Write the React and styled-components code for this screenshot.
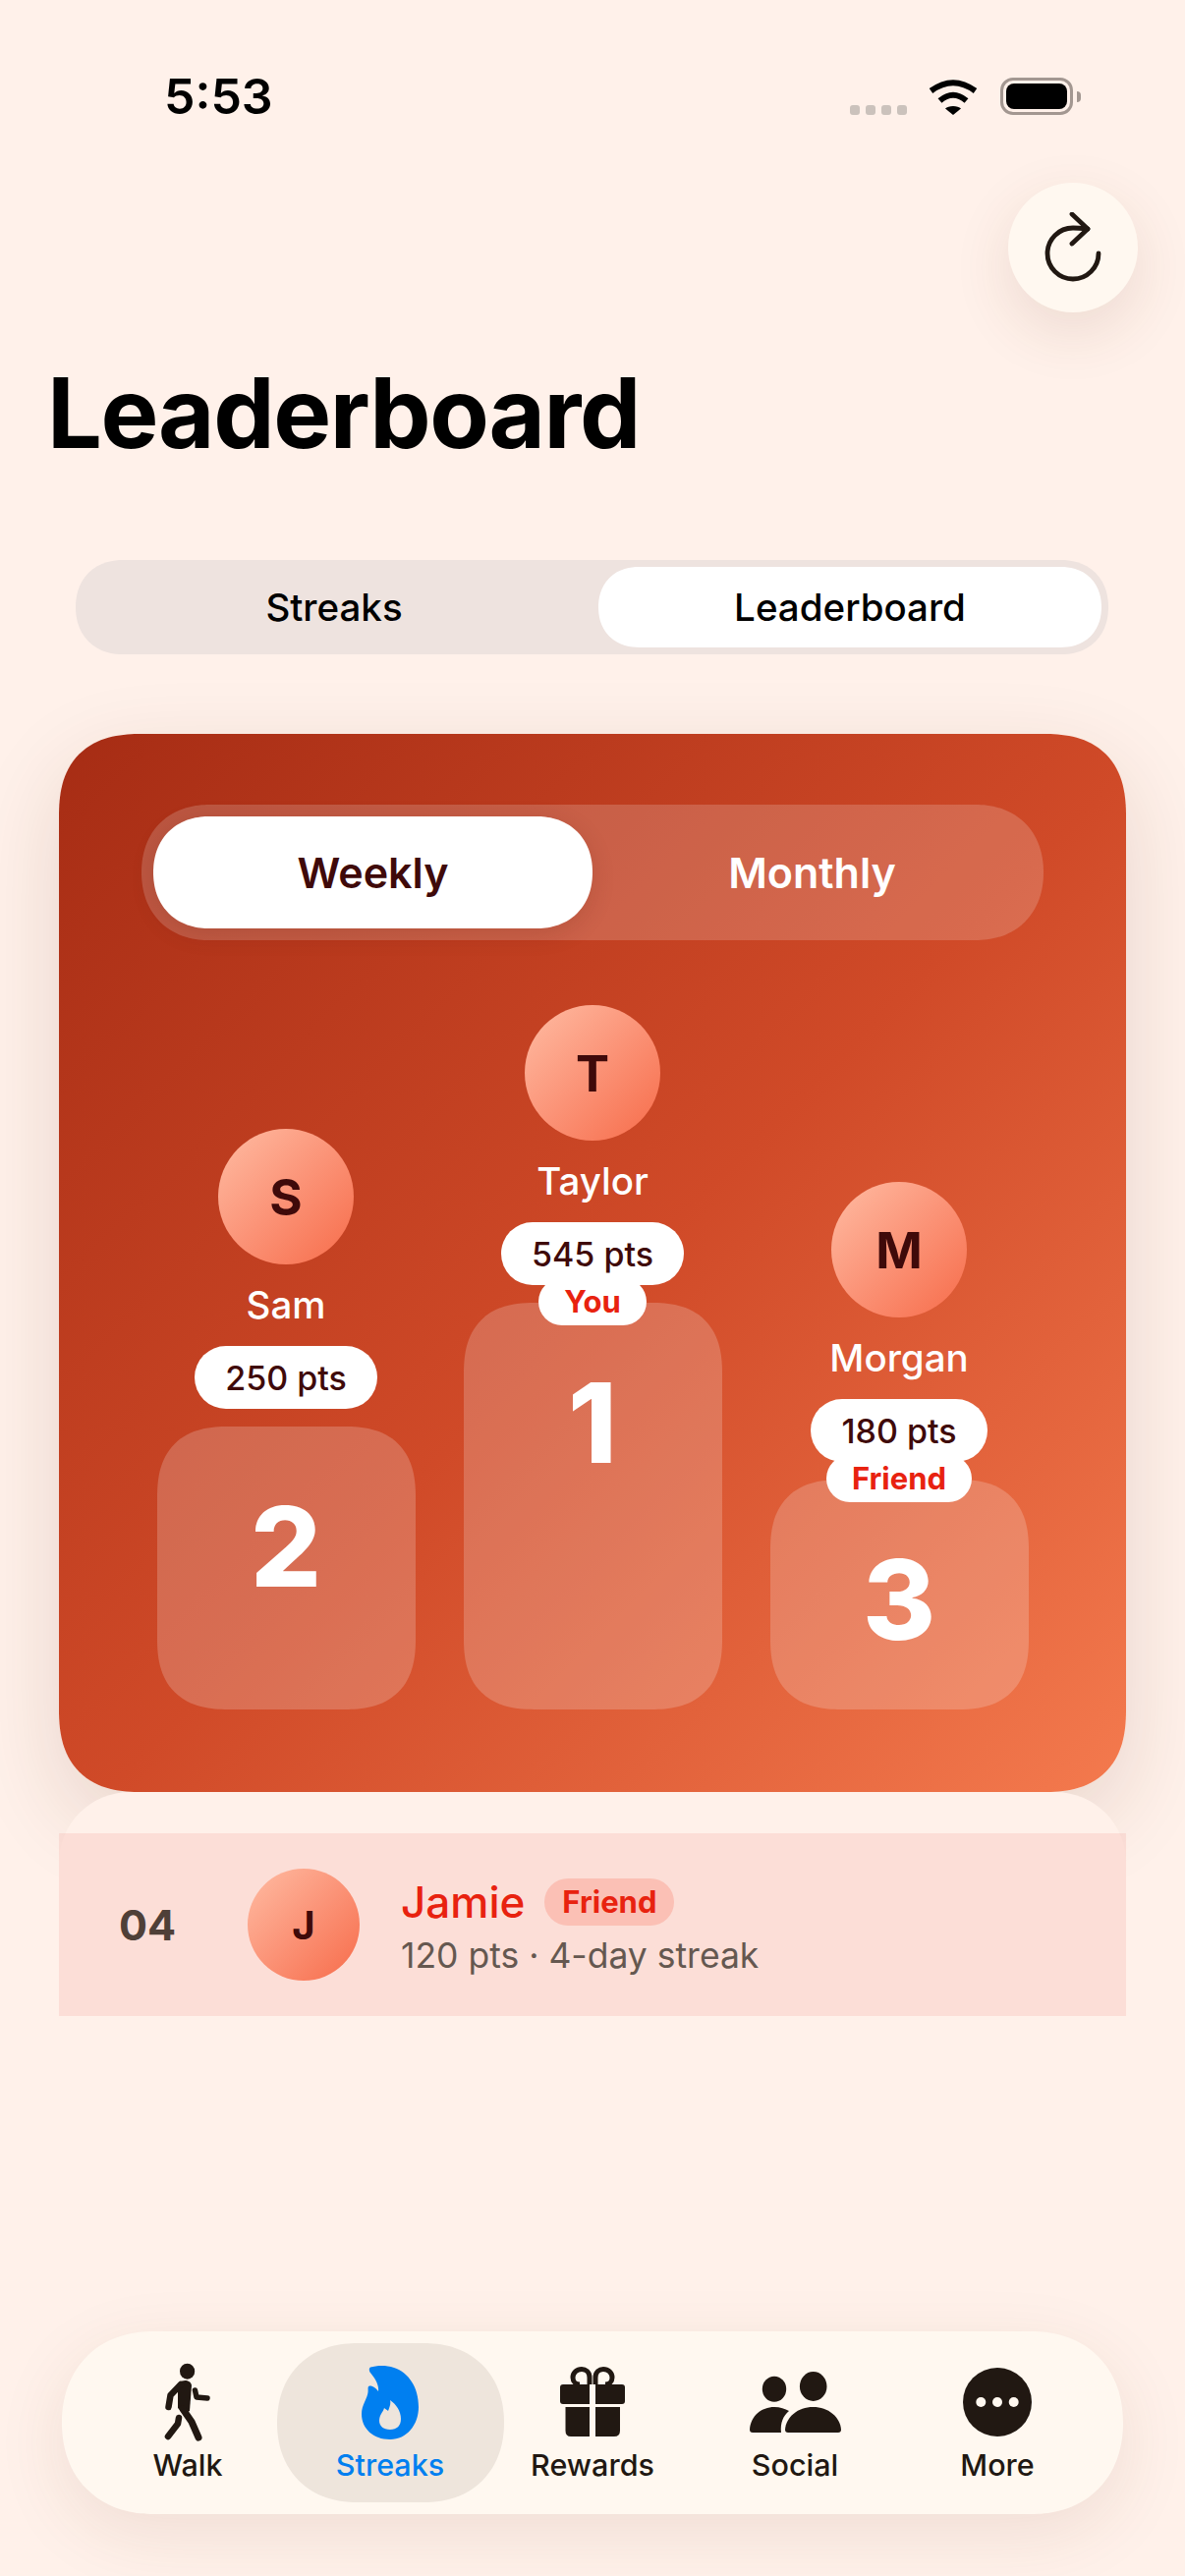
import React from 'react';
import styled, { createGlobalStyle, css } from 'styled-components';

const GlobalStyle = createGlobalStyle`
  html, body {
    margin: 0;
    padding: 0;
    background: #fff1ea;
  }
  * {
    box-sizing: border-box;
  }
`;

// continuous corners for the big panels, a softer one for the pills
const squircle = css`
  corner-shape: superellipse(1.3);
`;

const softPill = css`
  corner-shape: superellipse(1.12);
`;

const Page = styled.div`
  width: 1206px;
  height: 2622px;
  padding-top: 79px;
  display: flex;
  flex-direction: column;
  overflow: hidden;
  background: #fff1ea;
  color: #000;
  font-family: Inter, 'Liberation Sans', sans-serif;
`;

const StatusBar = styled.div`
  height: 38px;
  padding: 0 106px 0 167px;
  display: flex;
  align-items: center;
  justify-content: space-between;
`;

const Time = styled.div`
  font-size: 50px;
  font-weight: 600;
  line-height: 38px;
`;

const StatusIcons = styled.div`
  display: flex;
  align-items: flex-end;
`;

const SignalDots = styled.div`
  display: flex;
  gap: 6px;
  margin-right: 22px;
`;

const SignalDot = styled.span`
  width: 10px;
  height: 10px;
  border-radius: 3px;
  background: #cbc2bc;
`;

const Battery = styled.div`
  position: relative;
  width: 74px;
  height: 38px;
  margin: 0 8px 0 23px;
  padding: 3px;
  border: 3px solid #a39791;
  border-radius: 13px;

  &::after {
    content: '';
    position: absolute;
    right: -11px;
    top: 11px;
    width: 4px;
    height: 11px;
    border-radius: 0 4px 4px 0;
    background: #a39791;
  }
`;

const BatteryFill = styled.div`
  width: 100%;
  height: 100%;
  border-radius: 8px;
  background: #000;
`;

const RefreshButton = styled.button`
  align-self: flex-end;
  width: 132px;
  height: 132px;
  margin: 69px 48px 0 0;
  padding: 0;
  display: flex;
  align-items: center;
  justify-content: center;
  border: none;
  border-radius: 50%;
  background: #fff8f0;
  box-shadow: 0 20px 60px rgba(110, 60, 30, 0.12);
`;

const Title = styled.h1`
  margin: 42px 0 0 48px;
  font-size: 99px;
  font-weight: 700;
  line-height: 120px;
  letter-spacing: -1.4px;
`;

const Segmented = styled.div`
  ${softPill}
  width: 1051px;
  height: 96px;
  margin: 90px 0 0 77px;
  padding: 7px;
  display: flex;
  gap: 13px;
  border-radius: 48px;
  background: #eee3df;
`;

const Segment = styled.div`
  ${softPill}
  flex: 1;
  display: flex;
  align-items: center;
  justify-content: center;
  border-radius: 41px;
  font-size: 38.500px;
  font-weight: 500;
  background: ${(p) => (p.$active ? '#fff' : 'transparent')};
`;

const Card = styled.section`
  ${squircle}
  width: 1086px;
  height: 1077px;
  margin: 81px 0 0 60px;
  padding-top: 72px;
  border-radius: 84px;
  background: linear-gradient(135deg, #a62c14 0%, #d04a28 52%, #f47a4e 100%);
  box-shadow: 0 30px 90px rgba(90, 40, 20, 0.14);
`;

const PeriodToggle = styled.div`
  ${softPill}
  width: 918px;
  height: 138px;
  margin: 0 auto;
  padding: 12px;
  display: flex;
  border-radius: 69px;
  background: rgba(255, 255, 255, 0.18);
`;

const PeriodOption = styled.div`
  ${softPill}
  flex: 1;
  display: flex;
  align-items: center;
  justify-content: center;
  border-radius: 57px;
  font-size: 43px;
  font-weight: 600;
  color: ${(p) => (p.$active ? '#3f0a0a' : '#fff')};
  background: ${(p) => (p.$active ? '#fff' : 'transparent')};
  box-shadow: ${(p) => (p.$active ? '0 6px 24px rgba(80, 20, 0, 0.14)' : 'none')};
`;

const PodiumRow = styled.div`
  height: 717px;
  margin-top: 66px;
  display: flex;
  align-items: flex-end;
  justify-content: center;
  gap: 49px;
`;

const PodiumColumn = styled.div`
  width: 263px;
  display: flex;
  flex-direction: column;
  align-items: center;
`;

const Avatar = styled.div`
  width: ${(p) => p.$size}px;
  height: ${(p) => p.$size}px;
  flex-shrink: 0;
  display: flex;
  align-items: center;
  justify-content: center;
  border-radius: 50%;
  background: linear-gradient(135deg, #ffbca3 0%, #fb9377 50%, #f76c4a 100%);
  color: #3f0a0a;
  font-size: ${(p) => p.$font}px;
  font-weight: 700;
`;

const PodiumName = styled.div`
  margin: 18px 0;
  font-size: 38.500px;
  font-weight: 500;
  line-height: 47px;
  color: #fff;
`;

const Points = styled.div`
  position: relative;
  height: 64px;
  margin-bottom: 18px;
  padding: 0 31px;
  display: flex;
  align-items: center;
  border-radius: 32px;
  background: #fff;
  color: #3f0a0a;
  font-size: 34px;
  font-weight: 500;
  white-space: nowrap;
`;

const PodiumTag = styled.div`
  position: relative;
  z-index: 1;
  height: 48px;
  margin: -25px 0 -23px;
  padding: 0 26px 2px;
  display: flex;
  align-items: center;
  border-radius: 24px;
  background: #fff;
  color: #e8220f;
  font-size: 31px;
  font-weight: 700;
`;

const Podium = styled.div`
  ${squircle}
  width: 100%;
  height: ${(p) => p.$height}px;
  padding-top: 66px;
  border-radius: 72px;
  background: rgba(255, 255, 255, 0.2);
  color: #fff;
  font-size: 113px;
  font-weight: 800;
  line-height: 113px;
  text-align: center;
`;

const ListPanel = styled.div`
  flex: 1;
  width: 1086px;
  margin-left: 60px;
  padding-top: 42px;
  border-radius: 72px 72px 0 0;
  background: #fff1ea;
`;

const ListRow = styled.div`
  height: 186px;
  padding-left: 61px;
  display: flex;
  align-items: center;
  background: rgba(233, 92, 83, 0.12);
`;

const RowRank = styled.div`
  width: 131px;
  font-size: 43px;
  font-weight: 700;
  color: #4f4038;
`;

const RowBody = styled.div`
  margin-left: 42px;
  padding-top: 4px;
  display: flex;
  flex-direction: column;
`;

const RowTop = styled.div`
  height: 52px;
  display: flex;
  align-items: center;
  gap: 20px;
`;

const RowName = styled.div`
  font-size: 44px;
  font-weight: 500;
  color: #e8220f;
`;

const RowTag = styled.div`
  height: 48px;
  padding: 0 18px;
  display: flex;
  align-items: center;
  border-radius: 24px;
  background: #fbc0b5;
  color: #e8220f;
  font-size: 31px;
  font-weight: 700;
`;

const RowMeta = styled.div`
  margin-top: 7px;
  font-size: 35.500px;
  line-height: 44px;
  color: #655850;
`;

const TabBar = styled.nav`
  ${softPill}
  width: 1080px;
  height: 186px;
  margin: 0 0 63px 63px;
  padding: 0 25px;
  flex-shrink: 0;
  display: flex;
  align-items: center;
  border-radius: 93px;
  background: #fff8f0;
  box-shadow: 0 20px 70px rgba(110, 60, 30, 0.1);
`;

const TabItem = styled.div`
  ${softPill}
  flex: 0 0 ${(p) => (p.$active ? 231 : 206)}px;
  height: 162px;
  margin: 0 ${(p) => (p.$active ? -12.5 : 0)}px;
  padding-top: 20px;
  display: flex;
  flex-direction: column;
  align-items: center;
  border-radius: 81px;
  background: ${(p) => (p.$active ? '#eee5dc' : 'transparent')};
  color: ${(p) => (p.$active ? '#007ff0' : '#211812')};
`;

const TabIcon = styled.div`
  height: 80px;
  display: flex;
  align-items: center;
  justify-content: center;
`;

const TabLabel = styled.div`
  margin-top: 6px;
  font-size: 30.500px;
  font-weight: 500;
  line-height: 36px;
`;

function WifiIcon() {
  return (
    <svg width="50" height="37" viewBox="0 0 50 37" fill="none" stroke="#000" strokeWidth="6">
      <path d="M2.5 12.5Q25-4 47.5 12.5" />
      <path d="M11.5 22.5Q25 11 38.5 22.5" />
      <path d="M17 30.6C20 27 30 27 33 30.6L25 37Z" fill="#000" stroke="none" />
    </svg>
  );
}

function RefreshIcon() {
  return (
    <svg width="62" height="72" viewBox="0 0 62 72" fill="none" stroke="#211812" strokeWidth="4.8" strokeLinecap="round" strokeLinejoin="round">
      <path d="M57 42A26 26 0 1 1 31 16C36 16 41 16.5 46 17" />
      <path d="M30 2L46 17L30 32" />
    </svg>
  );
}

function WalkIcon() {
  return (
    <svg width="50" height="80" viewBox="0 0 50 80" fill="#211812" stroke="#211812" strokeLinecap="round" strokeLinejoin="round">
      <ellipse cx="24.6" cy="8.7" rx="7.6" ry="8" stroke="none" />
      <path d="M17 20C20 17 28 17 29 23L27 49L21 52L15 46L15 28Z" stroke="none" />
      <path d="M18 22L7.5 33L5.5 45" fill="none" strokeWidth="6.5" />
      <path d="M20 47L29 60L36 76" fill="none" strokeWidth="7" />
      <path d="M16 56L15 62L5 75" fill="none" strokeWidth="6.5" />
      <path d="M32.5 28L34 35L45 36" fill="none" strokeWidth="5.5" />
    </svg>
  );
}

function FlameIcon() {
  return (
    <svg width="58" height="75" viewBox="0 0 58 75" fill="#007ff0">
      <path
        fillRule="evenodd"
        d="M9 1.5C15 0 24-1 33 2C48 7 58 22 58 42C58 60 46 75 29 75C12 75 0 64 0 49C0 40 6 33 6.5 27C6.8 23 6 21 8 20.500C11 20 15 23 17 26C18 19 13 12 8.5 6.5C7.5 4.5 7.5 2.5 9 1.5ZM29 35C30 39 28.500 42 27 46C26 45 24 44 23 43C22 47 18 50 18 56C18 61 22 65 29 65C36 65 40 61 40 54C40 46 35 39 29 35Z"
      />
    </svg>
  );
}

function GiftIcon() {
  return (
    <svg width="66" height="72" viewBox="0 0 66 72" fill="#211812">
      <path d="M30 11C30 5 26 2.500 22 2.500C17 2.500 13 6 13 11C13 15 16 18 20 18M36 11C36 5 40 2.500 44 2.500C49 2.500 53 6 53 11C53 15 50 18 46 18M30 11V18M36 11V18" fill="none" stroke="#211812" strokeWidth="5" />
      <path d="M3 18H30V38H3Q0 38 0 35V21Q0 18 3 18Z" />
      <path d="M36 18H63Q66 18 66 21V35Q66 38 63 38H36Z" />
      <path d="M5.500 41H30V71H11Q5.500 71 5.500 65Z" />
      <path d="M36 41H61V65Q61 71 55 71H36Z" />
    </svg>
  );
}

function SocialIcon() {
  return (
    <svg width="93" height="62" viewBox="0 0 93 62" fill="#211812">
      <ellipse cx="25" cy="17.700" rx="12.200" ry="13" />
      <ellipse cx="64.700" cy="15" rx="13.800" ry="15" />
      <path d="M0 59C1 45 12 36 25 36C31 36 36 38 40 40C34 45 31 52 32 62H3Q0 62 0 59Z" />
      <path d="M36 59C37 46 49 36 64.500 36C80 36 92 46 93 59Q93 62 90 62H39Q36 62 36 59Z" />
    </svg>
  );
}

function MoreIcon() {
  return (
    <svg width="70" height="70" viewBox="0 0 70 70">
      <circle cx="35" cy="35" r="35" fill="#211812" />
      <circle cx="18.300" cy="35" r="5" fill="#fff8f0" />
      <circle cx="35" cy="35" r="5" fill="#fff8f0" />
      <circle cx="51.700" cy="35" r="5" fill="#fff8f0" />
    </svg>
  );
}

const podium = [
  { name: 'Sam', initial: 'S', points: '250 pts', rank: 2, height: 288 },
  { name: 'Taylor', initial: 'T', points: '545 pts', tag: 'You', rank: 1, height: 414 },
  { name: 'Morgan', initial: 'M', points: '180 pts', tag: 'Friend', rank: 3, height: 234 },
];

const tabs = [
  { label: 'Walk', icon: <WalkIcon /> },
  { label: 'Streaks', icon: <FlameIcon />, active: true },
  { label: 'Rewards', icon: <GiftIcon /> },
  { label: 'Social', icon: <SocialIcon /> },
  { label: 'More', icon: <MoreIcon /> },
];

export default function App() {
  return (
    <Page>
      <GlobalStyle />
      <StatusBar>
        <Time>5:53</Time>
        <StatusIcons>
          <SignalDots>
            <SignalDot />
            <SignalDot />
            <SignalDot />
            <SignalDot />
          </SignalDots>
          <WifiIcon />
          <Battery>
            <BatteryFill />
          </Battery>
        </StatusIcons>
      </StatusBar>

      <RefreshButton>
        <RefreshIcon />
      </RefreshButton>

      <Title>Leaderboard</Title>

      <Segmented>
        <Segment>Streaks</Segment>
        <Segment $active>Leaderboard</Segment>
      </Segmented>

      <Card>
        <PeriodToggle>
          <PeriodOption $active>Weekly</PeriodOption>
          <PeriodOption>Monthly</PeriodOption>
        </PeriodToggle>
        <PodiumRow>
          {podium.map((entry) => (
            <PodiumColumn key={entry.name}>
              <Avatar $size={138} $font={51}>
                {entry.initial}
              </Avatar>
              <PodiumName>{entry.name}</PodiumName>
              <Points>{entry.points}</Points>
              {entry.tag && <PodiumTag>{entry.tag}</PodiumTag>}
              <Podium $height={entry.height}>{entry.rank}</Podium>
            </PodiumColumn>
          ))}
        </PodiumRow>
      </Card>

      <ListPanel>
        <ListRow>
          <RowRank>04</RowRank>
          <Avatar $size={114} $font={40}>
            J
          </Avatar>
          <RowBody>
            <RowTop>
              <RowName>Jamie</RowName>
              <RowTag>Friend</RowTag>
            </RowTop>
            <RowMeta>120 pts · 4-day streak</RowMeta>
          </RowBody>
        </ListRow>
      </ListPanel>

      <TabBar>
        {tabs.map((tab) => (
          <TabItem key={tab.label} $active={tab.active}>
            <TabIcon>{tab.icon}</TabIcon>
            <TabLabel>{tab.label}</TabLabel>
          </TabItem>
        ))}
      </TabBar>
    </Page>
  );
}
